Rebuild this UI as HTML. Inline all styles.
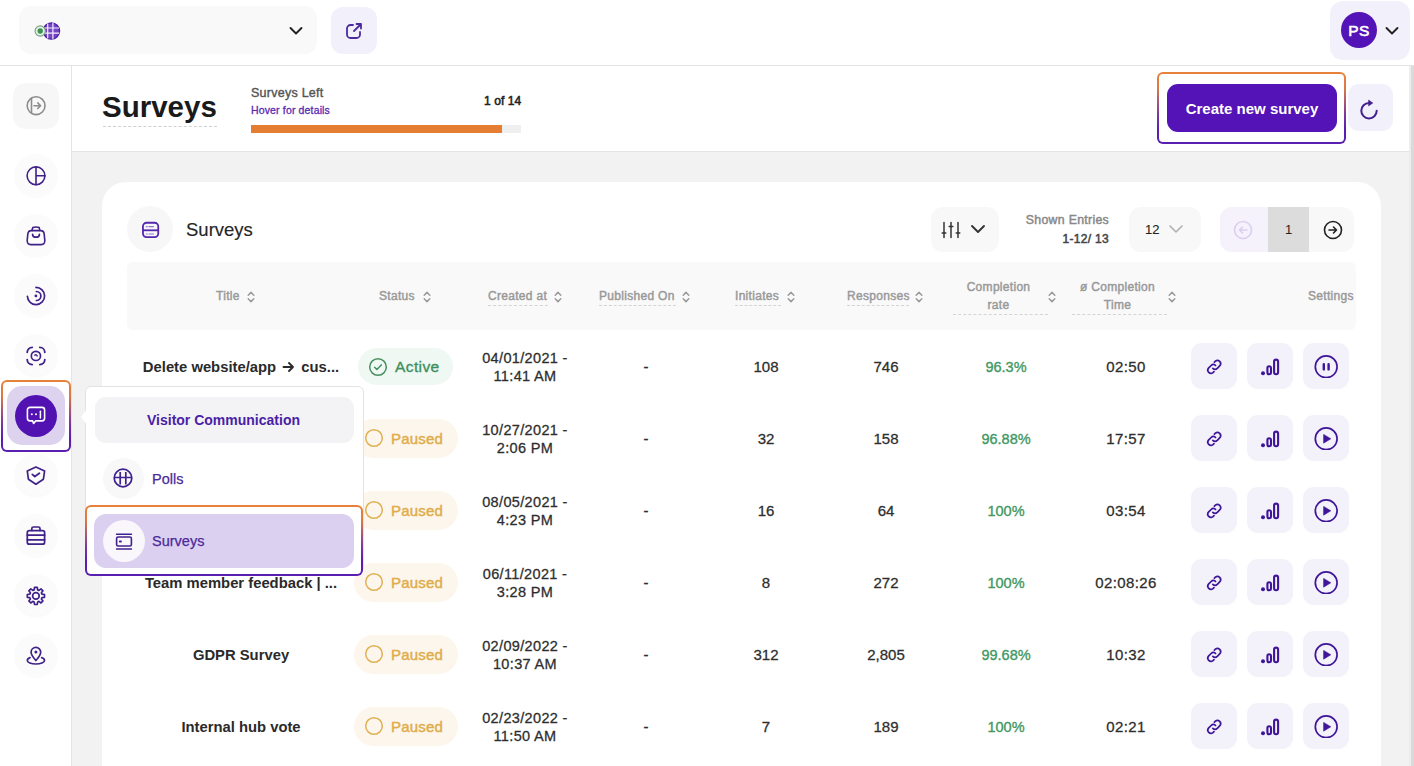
<!DOCTYPE html>
<html><head><meta charset="utf-8">
<style>
*{box-sizing:border-box;margin:0;padding:0}
html,body{width:1414px;height:766px;overflow:hidden}
body{font-family:"Liberation Sans",sans-serif;background:#f2f2f2;position:relative;color:#2b2b2b}
.abs{position:absolute}
svg{display:block}
#topbar{left:0;top:0;width:1414px;height:66px;background:#fff;border-bottom:1px solid #e4e4e4}
#sidebar{left:0;top:66px;width:72px;height:700px;background:#fff;border-right:1px solid #e4e4e4}
#pagehead{left:72px;top:66px;width:1342px;height:86px;background:#fff;border-bottom:1px solid #e4e4e4}
#rightline{left:1409px;top:66px;width:5px;height:700px;background:linear-gradient(90deg,#ededed 0,#ededed 2px,#dadada 2px,#dadada 5px)}
#card{left:102px;top:182px;width:1279px;height:620px;background:#fff;border-radius:24px}
.sbtn{position:absolute;left:14px;width:44px;height:44px;border-radius:50%;background:#fcfbfb}
.sbtn svg{position:absolute;left:11px;top:11px}
.hl{position:absolute;border:2.6px solid transparent;border-radius:6px;
 background:linear-gradient(#fff,#fff) padding-box,linear-gradient(180deg,#e8823a 0%,#dd7a42 22%,#7a35a0 60%,#5a1fb0 80%,#5a1fb0 100%) border-box}
.th{position:absolute;top:289px;font-size:12px;font-weight:400;color:#999;white-space:nowrap;-webkit-text-stroke:0.45px #999;letter-spacing:0.3px}
.sort{position:absolute;top:290px}
.cell{position:absolute;font-size:15px;font-weight:700;color:#2b2b2b;white-space:nowrap;text-align:center}
.num{font-weight:400;color:#333}
.badge{position:absolute;height:40px;border-radius:20px}
.act{position:absolute;width:46px;height:46px;border-radius:11px;background:#f3f1fa}
.act svg{position:absolute;left:11px;top:11px}

</style></head><body>
<!-- top bar -->
<div id="topbar" class="abs"></div>
<div class="abs" style="left:19px;top:6px;width:298px;height:48px;border-radius:12px;background:#f9f9f9"></div>
<svg class="abs" style="left:30px;top:18px" width="32" height="26" viewBox="0 0 32 26">
 <circle cx="21.4" cy="13" r="8.2" fill="#7444c4" stroke="#4d1fa3" stroke-width="1.3"/>
 <path d="M17.7 5.6v14.8M22.9 4.8v16.4M13.6 10h15.6M13.6 15.2h15.6" stroke="#f3ecfc" stroke-width="1.2"/>
 <circle cx="10.2" cy="13" r="5.1" fill="#e3f5e6" stroke="#789f80" stroke-width="1.1"/>
 <circle cx="10.2" cy="13" r="2.7" fill="#3d8f4f"/>
</svg>
<svg class="abs" style="left:288px;top:24px" width="16" height="12" viewBox="0 0 16 12"><path d="M2.5 4l5.5 5.5 5.5-5.5" fill="none" stroke="#222" stroke-width="1.9" stroke-linecap="round" stroke-linejoin="round"/></svg>
<div class="abs" style="left:331px;top:7px;width:46px;height:47px;border-radius:12px;background:#f2f0fa"></div>
<svg class="abs" style="left:344px;top:21px" width="20" height="20" viewBox="0 0 20 20"><path d="M9 4H6.5A3.5 3.5 0 0 0 3 7.5v6A3.5 3.5 0 0 0 6.5 17h6a3.5 3.5 0 0 0 3.5-3.5V11M10 10l7-7M12.5 3H17v4.5" fill="none" stroke="#4b2a9c" stroke-width="1.8" stroke-linecap="round" stroke-linejoin="round"/></svg>

<div class="abs" style="left:1330px;top:1px;width:80px;height:59px;border-radius:13px;background:#f2f0fa"></div>
<div class="abs" style="left:1341px;top:12px;width:36px;height:36px;border-radius:50%;background:#5313b6;color:#fff;font-size:15.5px;font-weight:400;-webkit-text-stroke:0.6px #fff;text-align:center;line-height:38px;letter-spacing:0.3px">PS</div>
<svg class="abs" style="left:1384px;top:24px" width="16" height="12" viewBox="0 0 16 12"><path d="M2.5 4l5.5 5.5 5.5-5.5" fill="none" stroke="#222" stroke-width="1.9" stroke-linecap="round" stroke-linejoin="round"/></svg>


<div id="sidebar" class="abs"></div>
<div id="pagehead" class="abs"></div>
<div id="rightline" class="abs"></div>
<div class="abs" style="left:13px;top:83px;width:46px;height:46px;border-radius:13px;background:#f7f7f7"></div>
<svg class="abs" style="left:25px;top:95px" width="22" height="22" viewBox="0 0 22 22"><circle cx="11.1" cy="10.7" r="8.9" fill="none" stroke="#8c8c8c" stroke-width="1.6"/><path d="M6.5 2.3v16.8" stroke="#8c8c8c" stroke-width="1.6"/><path d="M9 10.7h6.6M12.8 7.9l2.8 2.8-2.8 2.8" fill="none" stroke="#8c8c8c" stroke-width="1.6" stroke-linecap="round" stroke-linejoin="round"/></svg>
<div class="sbtn" style="top:154px"><svg width="22" height="22" viewBox="0 0 22 22"><circle cx="11" cy="10.8" r="8.9" fill="none" stroke="#3f2189" stroke-width="1.6" stroke-linecap="round" stroke-linejoin="round"/><path d="M11 1.9v17.8M11 10.8h8.9" fill="none" stroke="#3f2189" stroke-width="1.6" stroke-linecap="round" stroke-linejoin="round"/></svg></div>
<div class="sbtn" style="top:214px"><svg width="22" height="22" viewBox="0 0 22 22"><path d="M6.9 5.4 7.8 2.6Q11 1.4 14.2 2.6L14.8 5.4" fill="none" stroke="#3f2189" stroke-width="1.6" stroke-linecap="round" stroke-linejoin="round"/><path d="M6.2 5.6h9.6q3 0 3.4 3.5l.6 6.3q.2 4.2-3.6 4.2H5.8q-3.8 0-3.6-4.2l.6-6.3q.4-3.5 3.4-3.5z" fill="none" stroke="#3f2189" stroke-width="1.6" stroke-linecap="round" stroke-linejoin="round"/><path d="M7.6 9.4q0 2.8 3.4 2.8t3.4-2.8" fill="none" stroke="#3f2189" stroke-width="1.7" stroke-linecap="round" stroke-linejoin="round"/></svg></div>
<div class="sbtn" style="top:274px"><svg width="22" height="22" viewBox="0 0 22 22"><path d="M11 2.4A8.6 8.6 0 1 1 2.4 11.4" fill="none" stroke="#3f2189" stroke-width="1.7" stroke-linecap="round" stroke-linejoin="round"/><path d="M11.4 6.5A4.5 4.5 0 0 1 11.4 15.5" fill="none" stroke="#3f2189" stroke-width="1.7" stroke-linecap="round" stroke-linejoin="round"/><circle cx="10.9" cy="10.9" r="1.4" fill="#3f2189"/></svg></div>
<div class="sbtn" style="top:334px"><svg width="22" height="22" viewBox="0 0 22 22"><path d="M2.2 7.3A5 5 0 0 1 7.2 2.3M14.8 2.3A5 5 0 0 1 19.8 7.3M19.8 14.6A5 5 0 0 1 14.8 19.6M7.2 19.6A5 5 0 0 1 2.2 14.6" fill="none" stroke="#3f2189" stroke-width="1.8" stroke-linecap="round" stroke-linejoin="round"/><circle cx="10.9" cy="10.9" r="4.6" fill="none" stroke="#3f2189" stroke-width="1.7" stroke-linecap="round" stroke-linejoin="round"/><path d="M9.8 10.2a1.4 1.4 0 0 1 2.4.9" fill="none" stroke="#3f2189" stroke-width="1.3" stroke-linecap="round" stroke-linejoin="round"/></svg></div>
<div class="hl" style="left:1px;top:380px;width:70px;height:72px"></div>
<div class="abs" style="left:7px;top:386px;width:58px;height:59px;border-radius:15px;background:#ddd3ef"></div>
<div class="abs" style="left:15px;top:395px;width:42px;height:42px;border-radius:50%;background:#5212b2"></div>
<svg class="abs" style="left:25px;top:405px" width="22" height="22" viewBox="0 0 22 22"><path d="M5 2.4h12a2.6 2.6 0 0 1 2.6 2.6v8.3a2.6 2.6 0 0 1-2.6 2.6h-6.4l-2 2.5-1-2.5H5a2.6 2.6 0 0 1-2.6-2.6V5A2.6 2.6 0 0 1 5 2.4z" fill="none" stroke="#fff" stroke-width="1.6" stroke-linejoin="round"/><circle cx="6.8" cy="9.3" r="1" fill="#fff"/><circle cx="11" cy="9.3" r="1" fill="#fff"/><path d="M15.4 6.2v6.8" stroke="#fff" stroke-width="1.5" stroke-linecap="round"/></svg>
<div class="sbtn" style="top:454px"><svg width="22" height="22" viewBox="0 0 22 22"><path d="M10.9 2.1 19.6 6.1 18.4 14.2 10.9 19.2 3.4 14.2 2.3 6.1z" fill="none" stroke="#3f2189" stroke-width="1.7" stroke-linecap="round" stroke-linejoin="round"/><path d="M7.3 9.4 9.8 11.5 14.4 8.2" fill="none" stroke="#3f2189" stroke-width="1.8" stroke-linecap="round" stroke-linejoin="round"/></svg></div>
<div class="sbtn" style="top:514px"><svg width="22" height="22" viewBox="0 0 22 22"><path d="M6.8 5.4V3.6q0-1.6 1.6-1.6h5q1.6 0 1.6 1.6v1.8" fill="none" stroke="#3f2189" stroke-width="1.7" stroke-linecap="round" stroke-linejoin="round"/><rect x="2.3" y="5.6" width="17.3" height="13.6" rx="2" fill="none" stroke="#3f2189" stroke-width="1.7" stroke-linecap="round" stroke-linejoin="round"/><path d="M2.3 10.2h17.3M2.3 14.8h17.3" fill="none" stroke="#3f2189" stroke-width="1.8" stroke-linecap="round" stroke-linejoin="round"/></svg></div>
<div class="sbtn" style="top:574px"><svg width="22" height="22" viewBox="0 0 22 22"><path d="M9.16 4.85L9.51 2.31L12.29 2.31L12.64 4.85L13.95 5.39L15.99 3.85L17.95 5.81L16.41 7.85L16.95 9.16L19.49 9.51L19.49 12.29L16.95 12.64L16.41 13.95L17.95 15.99L15.99 17.95L13.95 16.41L12.64 16.95L12.29 19.49L9.51 19.49L9.16 16.95L7.85 16.41L5.81 17.95L3.85 15.99L5.39 13.95L4.85 12.64L2.31 12.29L2.31 9.51L4.85 9.16L5.39 7.85L3.85 5.81L5.81 3.85L7.85 5.39Z" fill="none" stroke="#3f2189" stroke-width="1.7" stroke-linecap="round" stroke-linejoin="round"/><circle cx="10.9" cy="10.9" r="3.3" fill="none" stroke="#3f2189" stroke-width="1.7" stroke-linecap="round" stroke-linejoin="round"/></svg></div>
<div class="sbtn" style="top:634px"><svg width="22" height="22" viewBox="0 0 22 22"><path d="M10.9 15.5C8.5 12.8 6.1 10 6.1 7.2a4.8 4.8 0 0 1 9.6 0c0 2.8-2.4 5.6-4.8 8.3z" fill="none" stroke="#3f2189" stroke-width="1.7" stroke-linecap="round" stroke-linejoin="round"/><circle cx="10.9" cy="7" r="1.5" fill="#3f2189"/><path d="M5 12.6C3.2 13.2 2.3 14.2 2.3 15.5c0 2 3.9 3.5 8.6 3.5s8.6-1.5 8.6-3.5c0-1.3-.9-2.3-2.8-2.9" fill="none" stroke="#3f2189" stroke-width="1.7" stroke-linecap="round" stroke-linejoin="round"/></svg></div>
<!-- page header -->
<div class="abs" style="left:102px;top:90px;font-size:29.5px;font-weight:700;color:#1a1a1a;letter-spacing:0;line-height:34px">Surveys</div>
<div class="abs" style="left:103px;top:126px;width:114px;height:0;border-top:1px dashed #cfcfcf"></div>
<div class="abs" style="left:251px;top:86px;font-size:12.5px;font-weight:400;color:#555;line-height:14px;-webkit-text-stroke:0.4px #555;letter-spacing:0.25px">Surveys Left</div>
<div class="abs" style="left:251px;top:104px;font-size:10.5px;font-weight:400;color:#5a2ab3;line-height:12px;-webkit-text-stroke:0.3px #5a2ab3;letter-spacing:0.15px">Hover for details</div>
<div class="abs" style="left:484px;top:94px;font-size:12px;font-weight:400;-webkit-text-stroke:0.55px #222;letter-spacing:0.1px;color:#222;line-height:14px">1 of 14</div>
<div class="abs" style="left:251px;top:125px;width:270px;height:8px;background:#efefef"></div>
<div class="abs" style="left:251px;top:125px;width:251px;height:8px;background:#e57d33"></div>

<div class="hl" style="left:1157px;top:72px;width:189px;height:72px"></div>
<div class="abs" style="left:1167px;top:84px;width:170px;height:48px;border-radius:11px;background:#5313b6;color:#fff;font-size:15px;font-weight:700;text-align:center;line-height:50px">Create new survey</div>
<div class="abs" style="left:1348px;top:84px;width:45px;height:47px;border-radius:11px;background:#f2f0fa"></div>
<svg class="abs" style="left:1358px;top:98px" width="22" height="22" viewBox="0 0 22 22"><path d="M18.7 12.8A7.7 7.7 0 1 1 11 5" fill="none" stroke="#43228f" stroke-width="2" stroke-linecap="round"/><path d="M10.6 2.1l4.2 2.9-4.2 2.9z" fill="#43228f" stroke="#43228f" stroke-width="0.6" stroke-linejoin="round"/></svg>

<!-- card -->
<div id="card" class="abs"></div>
<!-- card header -->
<div class="abs" style="left:127px;top:206px;width:46px;height:46px;border-radius:50%;background:#f7f7f7"></div>
<svg class="abs" style="left:140px;top:220px" width="20" height="20" viewBox="0 0 20 20"><rect x="2.95" y="2.75" width="15.3" height="14.4" rx="3.6" fill="none" stroke="#5527b0" stroke-width="1.8"/><path d="M2.95 10.3h15.3" stroke="#5527b0" stroke-width="1.8"/><path d="M6.3 6.6h.9M8.9 6.6h4.6M6.3 14h.9M8.9 14h4.6" stroke="#8f72cc" stroke-width="1.2" stroke-linecap="round"/></svg>
<div class="abs" style="left:186px;top:219px;font-size:18.5px;color:#262626;-webkit-text-stroke:0.15px #262626;line-height:22px">Surveys</div>

<div class="abs" style="left:931px;top:207px;width:68px;height:45px;border-radius:12px;background:#f8f8f8"></div>
<svg class="abs" style="left:940px;top:220px" width="22" height="20" viewBox="0 0 22 20"><path d="M4 2.5v15M11 2.5v15M18 2.5v15" stroke="#333" stroke-width="1.5" stroke-linecap="round"/><path d="M2.2 13h3.6M9.2 6.5h3.6M16.2 13h3.6" stroke="#333" stroke-width="1.5" stroke-linecap="round"/></svg>
<svg class="abs" style="left:970px;top:223px" width="16" height="12" viewBox="0 0 16 12"><path d="M2 3l6 6 6-6" fill="none" stroke="#333" stroke-width="1.9" stroke-linecap="round" stroke-linejoin="round"/></svg>
<div class="abs" style="left:1000px;top:213px;width:109px;text-align:right;font-size:12.3px;font-weight:400;color:#888;line-height:14px;-webkit-text-stroke:0.45px #888;letter-spacing:0.3px">Shown Entries</div>
<div class="abs" style="left:1000px;top:232px;width:109px;text-align:right;font-size:12px;font-weight:400;-webkit-text-stroke:0.5px #444;letter-spacing:0.3px;color:#444;line-height:14px">1-12/ 13</div>
<div class="abs" style="left:1129px;top:207px;width:72px;height:45px;border-radius:12px;background:#f8f8f8"></div>
<div class="abs" style="left:1145px;top:222px;font-size:13px;color:#222;line-height:15px;-webkit-text-stroke:0.1px #222">12</div>
<svg class="abs" style="left:1168px;top:223px" width="16" height="12" viewBox="0 0 16 12"><path d="M2 3l6 6 6-6" fill="none" stroke="#b0b0b0" stroke-width="1.6" stroke-linecap="round" stroke-linejoin="round"/></svg>
<div class="abs" style="left:1220px;top:207px;width:134px;height:45px;border-radius:12px;background:#f8f8f8;overflow:hidden">
  <div class="abs" style="left:0;top:0;width:48px;height:45px;background:#f5f2fc"></div>
  <div class="abs" style="left:48px;top:0;width:41px;height:45px;background:#dcdcdc;text-align:center;line-height:45px;font-size:13px;color:#222">1</div>
</div>
<svg class="abs" style="left:1232px;top:219px" width="22" height="22" viewBox="0 0 22 22"><circle cx="11" cy="11" r="8.5" fill="none" stroke="#d9cff0" stroke-width="1.6"/><path d="M15 11H7.5M10.5 8l-3 3 3 3" fill="none" stroke="#d9cff0" stroke-width="1.6" stroke-linecap="round" stroke-linejoin="round"/></svg>
<svg class="abs" style="left:1322px;top:219px" width="22" height="22" viewBox="0 0 22 22"><circle cx="11" cy="11" r="8.5" fill="none" stroke="#222" stroke-width="1.6"/><path d="M7 11h7.5M11.5 8l3 3-3 3" fill="none" stroke="#222" stroke-width="1.6" stroke-linecap="round" stroke-linejoin="round"/></svg>

<!-- table header -->
<div class="abs" style="left:127px;top:262px;width:1229px;height:68px;border-radius:6px;background:#f9f9f9"></div>
<div class="th" style="left:216px">Title</div><div class="sort" style="left:247px"><svg width="8" height="14" viewBox="0 0 8 14"><path d="M1.2 5.2L4 2.4l2.8 2.8M1.2 8.8L4 11.6l2.8-2.8" fill="none" stroke="#9b9b9b" stroke-width="1.5" stroke-linecap="round" stroke-linejoin="round"/></svg></div>
<div class="th" style="left:379px">Status</div><div class="sort" style="left:423px"><svg width="8" height="14" viewBox="0 0 8 14"><path d="M1.2 5.2L4 2.4l2.8 2.8M1.2 8.8L4 11.6l2.8-2.8" fill="none" stroke="#9b9b9b" stroke-width="1.5" stroke-linecap="round" stroke-linejoin="round"/></svg></div>
<div class="th" style="left:488px">Created at</div><div class="sort" style="left:554px"><svg width="8" height="14" viewBox="0 0 8 14"><path d="M1.2 5.2L4 2.4l2.8 2.8M1.2 8.8L4 11.6l2.8-2.8" fill="none" stroke="#9b9b9b" stroke-width="1.5" stroke-linecap="round" stroke-linejoin="round"/></svg></div>
<div class="abs" style="left:488px;top:305px;width:60px;border-top:1px dashed #d4d4d4"></div>
<div class="th" style="left:599px">Published On</div><div class="sort" style="left:682px"><svg width="8" height="14" viewBox="0 0 8 14"><path d="M1.2 5.2L4 2.4l2.8 2.8M1.2 8.8L4 11.6l2.8-2.8" fill="none" stroke="#9b9b9b" stroke-width="1.5" stroke-linecap="round" stroke-linejoin="round"/></svg></div>
<div class="abs" style="left:599px;top:305px;width:77px;border-top:1px dashed #d4d4d4"></div>
<div class="th" style="left:735px">Initiates</div><div class="sort" style="left:787px"><svg width="8" height="14" viewBox="0 0 8 14"><path d="M1.2 5.2L4 2.4l2.8 2.8M1.2 8.8L4 11.6l2.8-2.8" fill="none" stroke="#9b9b9b" stroke-width="1.5" stroke-linecap="round" stroke-linejoin="round"/></svg></div>
<div class="abs" style="left:735px;top:305px;width:46px;border-top:1px dashed #d4d4d4"></div>
<div class="th" style="left:847px">Responses</div><div class="sort" style="left:915px"><svg width="8" height="14" viewBox="0 0 8 14"><path d="M1.2 5.2L4 2.4l2.8 2.8M1.2 8.8L4 11.6l2.8-2.8" fill="none" stroke="#9b9b9b" stroke-width="1.5" stroke-linecap="round" stroke-linejoin="round"/></svg></div>
<div class="abs" style="left:847px;top:305px;width:62px;border-top:1px dashed #d4d4d4"></div>
<div class="th" style="left:951px;width:95px;text-align:center;top:278px;line-height:18px">Completion<br>rate</div><div class="sort" style="left:1048px"><svg width="8" height="14" viewBox="0 0 8 14"><path d="M1.2 5.2L4 2.4l2.8 2.8M1.2 8.8L4 11.6l2.8-2.8" fill="none" stroke="#9b9b9b" stroke-width="1.5" stroke-linecap="round" stroke-linejoin="round"/></svg></div>
<div class="abs" style="left:953px;top:314px;width:95px;border-top:1px dashed #d4d4d4"></div>
<div class="th" style="left:1070px;width:95px;text-align:center;top:278px;line-height:18px">ø Completion<br>Time</div><div class="sort" style="left:1168px"><svg width="8" height="14" viewBox="0 0 8 14"><path d="M1.2 5.2L4 2.4l2.8 2.8M1.2 8.8L4 11.6l2.8-2.8" fill="none" stroke="#9b9b9b" stroke-width="1.5" stroke-linecap="round" stroke-linejoin="round"/></svg></div>
<div class="abs" style="left:1072px;top:314px;width:95px;border-top:1px dashed #d4d4d4"></div>
<div class="th" style="left:1308px">Settings</div>



<!-- rows -->
<div class="cell" style="left:127px;width:228px;top:357px;line-height:20px;font-size:14.8px;color:#2a2a2a">Delete website/app <svg style="display:inline-block;vertical-align:-1px;margin:0 2px" width="13" height="12" viewBox="0 0 13 12"><path d="M1.5 6h9.5M7 2l4 4-4 4" fill="none" stroke="#2b2b2b" stroke-width="1.9" stroke-linecap="round" stroke-linejoin="round"/></svg> cus...</div>
<div class="badge" style="left:358px;top:348px;width:95px;height:37px;background:#eff8f3"></div>
<svg class="abs" style="left:368px;top:357px" width="20" height="20" viewBox="0 0 20 20"><circle cx="10" cy="10" r="8.3" fill="none" stroke="#4a8f62" stroke-width="1.5"/><path d="M6.6 10.2l2.3 2.3 4.4-4.6" fill="none" stroke="#4a8f62" stroke-width="1.5" stroke-linecap="round" stroke-linejoin="round"/></svg>
<div class="abs" style="left:395px;top:357px;font-size:15.5px;font-weight:400;color:#3e8f5d;line-height:20px;letter-spacing:0.4px;-webkit-text-stroke:0.35px #3e8f5d">Active</div>
<div class="cell" style="left:465px;width:120px;top:349px;line-height:18px;font-size:14.5px;letter-spacing:0.35px;font-weight:400;color:#2e2e2e;-webkit-text-stroke:0.28px #2e2e2e">04/01/2021 -<br>11:41 AM</div>
<div class="cell" style="left:586px;width:120px;top:357px;line-height:20px;font-weight:400;color:#2e2e2e;-webkit-text-stroke:0.28px #2e2e2e">-</div>
<div class="cell" style="left:706px;width:120px;top:357px;line-height:20px;font-weight:400;color:#2e2e2e;-webkit-text-stroke:0.28px #2e2e2e">108</div>
<div class="cell" style="left:826px;width:120px;top:357px;line-height:20px;font-weight:400;color:#2e2e2e;-webkit-text-stroke:0.28px #2e2e2e">746</div>
<div class="cell" style="left:946px;width:120px;top:357px;line-height:20px;font-size:14.5px;font-weight:400;color:#419863;-webkit-text-stroke:0.35px #419863">96.3%</div>
<div class="cell" style="left:1066px;width:120px;top:357px;line-height:20px;letter-spacing:0.4px;font-weight:400;color:#2e2e2e;-webkit-text-stroke:0.28px #2e2e2e">02:50</div>
<div class="act" style="left:1191px;top:343px"><svg width="24" height="24" viewBox="0 0 24 24"><g transform="translate(0.2 0.9)"><path d="M10.6 13.4a3.2 3.2 0 0 0 4.5 0l2.6-2.6a3.2 3.2 0 0 0-4.5-4.5l-1 1M13.4 10.6a3.2 3.2 0 0 0-4.5 0l-2.6 2.6a3.2 3.2 0 0 0 4.5 4.5l1-1" fill="none" stroke="#3f1699" stroke-width="1.7" stroke-linecap="round"/></g></svg></div>
<div class="act" style="left:1247px;top:343px"><svg width="24" height="24" viewBox="0 0 24 24"><circle cx="5" cy="19.2" r="2" fill="#3f1699"/><rect x="9.4" y="12.2" width="3.6" height="8.1" rx="1.8" fill="none" stroke="#3f1699" stroke-width="2.1"/><rect x="16.1" y="5.6" width="4" height="14.7" rx="2" fill="none" stroke="#3f1699" stroke-width="2.1"/></svg></div>
<div class="act" style="left:1303px;top:343px"><svg width="24" height="24" viewBox="0 0 24 24"><circle cx="12.2" cy="12.8" r="10.9" fill="none" stroke="#3f1699" stroke-width="1.7"/><path d="M9.8 10.2v5.2M14.6 10.2v5.2" stroke="#3f1699" stroke-width="2.4" stroke-linecap="round"/></svg></div>
<div class="cell" style="left:127px;width:228px;top:429px;line-height:20px;font-size:14.8px;color:#2a2a2a">Survey feedback 2021</div>
<div class="badge" style="left:354px;top:419px;width:104px;height:39px;background:#fdf6ec"></div>
<svg class="abs" style="left:364px;top:428px" width="20" height="20" viewBox="0 0 20 20"><circle cx="10" cy="10" r="8.3" fill="none" stroke="#dfb153" stroke-width="1.5"/></svg>
<div class="abs" style="left:391px;top:429px;font-size:15px;font-weight:400;color:#e0ad4c;line-height:20px;letter-spacing:0.2px;-webkit-text-stroke:0.45px #e0ad4c">Paused</div>
<div class="cell" style="left:465px;width:120px;top:421px;line-height:18px;font-size:14.5px;letter-spacing:0.35px;font-weight:400;color:#2e2e2e;-webkit-text-stroke:0.28px #2e2e2e">10/27/2021 -<br>2:06 PM</div>
<div class="cell" style="left:586px;width:120px;top:429px;line-height:20px;font-weight:400;color:#2e2e2e;-webkit-text-stroke:0.28px #2e2e2e">-</div>
<div class="cell" style="left:706px;width:120px;top:429px;line-height:20px;font-weight:400;color:#2e2e2e;-webkit-text-stroke:0.28px #2e2e2e">32</div>
<div class="cell" style="left:826px;width:120px;top:429px;line-height:20px;font-weight:400;color:#2e2e2e;-webkit-text-stroke:0.28px #2e2e2e">158</div>
<div class="cell" style="left:946px;width:120px;top:429px;line-height:20px;font-size:14.5px;font-weight:400;color:#419863;-webkit-text-stroke:0.35px #419863">96.88%</div>
<div class="cell" style="left:1066px;width:120px;top:429px;line-height:20px;letter-spacing:0.4px;font-weight:400;color:#2e2e2e;-webkit-text-stroke:0.28px #2e2e2e">17:57</div>
<div class="act" style="left:1191px;top:415px"><svg width="24" height="24" viewBox="0 0 24 24"><g transform="translate(0.2 0.9)"><path d="M10.6 13.4a3.2 3.2 0 0 0 4.5 0l2.6-2.6a3.2 3.2 0 0 0-4.5-4.5l-1 1M13.4 10.6a3.2 3.2 0 0 0-4.5 0l-2.6 2.6a3.2 3.2 0 0 0 4.5 4.5l1-1" fill="none" stroke="#3f1699" stroke-width="1.7" stroke-linecap="round"/></g></svg></div>
<div class="act" style="left:1247px;top:415px"><svg width="24" height="24" viewBox="0 0 24 24"><circle cx="5" cy="19.2" r="2" fill="#3f1699"/><rect x="9.4" y="12.2" width="3.6" height="8.1" rx="1.8" fill="none" stroke="#3f1699" stroke-width="2.1"/><rect x="16.1" y="5.6" width="4" height="14.7" rx="2" fill="none" stroke="#3f1699" stroke-width="2.1"/></svg></div>
<div class="act" style="left:1303px;top:415px"><svg width="24" height="24" viewBox="0 0 24 24"><circle cx="12.2" cy="12.8" r="10.9" fill="none" stroke="#3f1699" stroke-width="1.7"/><path d="M9.6 8.4l7.2 4.4-7.2 4.4z" fill="#3f1699" stroke="#3f1699" stroke-width="0.6" stroke-linejoin="round"/></svg></div>
<div class="cell" style="left:127px;width:228px;top:501px;line-height:20px;font-size:14.8px;color:#2a2a2a">Product research</div>
<div class="badge" style="left:354px;top:491px;width:104px;height:39px;background:#fdf6ec"></div>
<svg class="abs" style="left:364px;top:500px" width="20" height="20" viewBox="0 0 20 20"><circle cx="10" cy="10" r="8.3" fill="none" stroke="#dfb153" stroke-width="1.5"/></svg>
<div class="abs" style="left:391px;top:501px;font-size:15px;font-weight:400;color:#e0ad4c;line-height:20px;letter-spacing:0.2px;-webkit-text-stroke:0.45px #e0ad4c">Paused</div>
<div class="cell" style="left:465px;width:120px;top:493px;line-height:18px;font-size:14.5px;letter-spacing:0.35px;font-weight:400;color:#2e2e2e;-webkit-text-stroke:0.28px #2e2e2e">08/05/2021 -<br>4:23 PM</div>
<div class="cell" style="left:586px;width:120px;top:501px;line-height:20px;font-weight:400;color:#2e2e2e;-webkit-text-stroke:0.28px #2e2e2e">-</div>
<div class="cell" style="left:706px;width:120px;top:501px;line-height:20px;font-weight:400;color:#2e2e2e;-webkit-text-stroke:0.28px #2e2e2e">16</div>
<div class="cell" style="left:826px;width:120px;top:501px;line-height:20px;font-weight:400;color:#2e2e2e;-webkit-text-stroke:0.28px #2e2e2e">64</div>
<div class="cell" style="left:946px;width:120px;top:501px;line-height:20px;font-size:14.5px;font-weight:400;color:#419863;-webkit-text-stroke:0.35px #419863">100%</div>
<div class="cell" style="left:1066px;width:120px;top:501px;line-height:20px;letter-spacing:0.4px;font-weight:400;color:#2e2e2e;-webkit-text-stroke:0.28px #2e2e2e">03:54</div>
<div class="act" style="left:1191px;top:487px"><svg width="24" height="24" viewBox="0 0 24 24"><g transform="translate(0.2 0.9)"><path d="M10.6 13.4a3.2 3.2 0 0 0 4.5 0l2.6-2.6a3.2 3.2 0 0 0-4.5-4.5l-1 1M13.4 10.6a3.2 3.2 0 0 0-4.5 0l-2.6 2.6a3.2 3.2 0 0 0 4.5 4.5l1-1" fill="none" stroke="#3f1699" stroke-width="1.7" stroke-linecap="round"/></g></svg></div>
<div class="act" style="left:1247px;top:487px"><svg width="24" height="24" viewBox="0 0 24 24"><circle cx="5" cy="19.2" r="2" fill="#3f1699"/><rect x="9.4" y="12.2" width="3.6" height="8.1" rx="1.8" fill="none" stroke="#3f1699" stroke-width="2.1"/><rect x="16.1" y="5.6" width="4" height="14.7" rx="2" fill="none" stroke="#3f1699" stroke-width="2.1"/></svg></div>
<div class="act" style="left:1303px;top:487px"><svg width="24" height="24" viewBox="0 0 24 24"><circle cx="12.2" cy="12.8" r="10.9" fill="none" stroke="#3f1699" stroke-width="1.7"/><path d="M9.6 8.4l7.2 4.4-7.2 4.4z" fill="#3f1699" stroke="#3f1699" stroke-width="0.6" stroke-linejoin="round"/></svg></div>
<div class="cell" style="left:127px;width:228px;top:573px;line-height:20px;font-size:14.8px;color:#2a2a2a">Team member feedback | ...</div>
<div class="badge" style="left:354px;top:563px;width:104px;height:39px;background:#fdf6ec"></div>
<svg class="abs" style="left:364px;top:572px" width="20" height="20" viewBox="0 0 20 20"><circle cx="10" cy="10" r="8.3" fill="none" stroke="#dfb153" stroke-width="1.5"/></svg>
<div class="abs" style="left:391px;top:573px;font-size:15px;font-weight:400;color:#e0ad4c;line-height:20px;letter-spacing:0.2px;-webkit-text-stroke:0.45px #e0ad4c">Paused</div>
<div class="cell" style="left:465px;width:120px;top:565px;line-height:18px;font-size:14.5px;letter-spacing:0.35px;font-weight:400;color:#2e2e2e;-webkit-text-stroke:0.28px #2e2e2e">06/11/2021 -<br>3:28 PM</div>
<div class="cell" style="left:586px;width:120px;top:573px;line-height:20px;font-weight:400;color:#2e2e2e;-webkit-text-stroke:0.28px #2e2e2e">-</div>
<div class="cell" style="left:706px;width:120px;top:573px;line-height:20px;font-weight:400;color:#2e2e2e;-webkit-text-stroke:0.28px #2e2e2e">8</div>
<div class="cell" style="left:826px;width:120px;top:573px;line-height:20px;font-weight:400;color:#2e2e2e;-webkit-text-stroke:0.28px #2e2e2e">272</div>
<div class="cell" style="left:946px;width:120px;top:573px;line-height:20px;font-size:14.5px;font-weight:400;color:#419863;-webkit-text-stroke:0.35px #419863">100%</div>
<div class="cell" style="left:1066px;width:120px;top:573px;line-height:20px;letter-spacing:0.4px;font-weight:400;color:#2e2e2e;-webkit-text-stroke:0.28px #2e2e2e">02:08:26</div>
<div class="act" style="left:1191px;top:559px"><svg width="24" height="24" viewBox="0 0 24 24"><g transform="translate(0.2 0.9)"><path d="M10.6 13.4a3.2 3.2 0 0 0 4.5 0l2.6-2.6a3.2 3.2 0 0 0-4.5-4.5l-1 1M13.4 10.6a3.2 3.2 0 0 0-4.5 0l-2.6 2.6a3.2 3.2 0 0 0 4.5 4.5l1-1" fill="none" stroke="#3f1699" stroke-width="1.7" stroke-linecap="round"/></g></svg></div>
<div class="act" style="left:1247px;top:559px"><svg width="24" height="24" viewBox="0 0 24 24"><circle cx="5" cy="19.2" r="2" fill="#3f1699"/><rect x="9.4" y="12.2" width="3.6" height="8.1" rx="1.8" fill="none" stroke="#3f1699" stroke-width="2.1"/><rect x="16.1" y="5.6" width="4" height="14.7" rx="2" fill="none" stroke="#3f1699" stroke-width="2.1"/></svg></div>
<div class="act" style="left:1303px;top:559px"><svg width="24" height="24" viewBox="0 0 24 24"><circle cx="12.2" cy="12.8" r="10.9" fill="none" stroke="#3f1699" stroke-width="1.7"/><path d="M9.6 8.4l7.2 4.4-7.2 4.4z" fill="#3f1699" stroke="#3f1699" stroke-width="0.6" stroke-linejoin="round"/></svg></div>
<div class="cell" style="left:127px;width:228px;top:645px;line-height:20px;font-size:14.8px;color:#2a2a2a">GDPR Survey</div>
<div class="badge" style="left:354px;top:635px;width:104px;height:39px;background:#fdf6ec"></div>
<svg class="abs" style="left:364px;top:644px" width="20" height="20" viewBox="0 0 20 20"><circle cx="10" cy="10" r="8.3" fill="none" stroke="#dfb153" stroke-width="1.5"/></svg>
<div class="abs" style="left:391px;top:645px;font-size:15px;font-weight:400;color:#e0ad4c;line-height:20px;letter-spacing:0.2px;-webkit-text-stroke:0.45px #e0ad4c">Paused</div>
<div class="cell" style="left:465px;width:120px;top:637px;line-height:18px;font-size:14.5px;letter-spacing:0.35px;font-weight:400;color:#2e2e2e;-webkit-text-stroke:0.28px #2e2e2e">02/09/2022 -<br>10:37 AM</div>
<div class="cell" style="left:586px;width:120px;top:645px;line-height:20px;font-weight:400;color:#2e2e2e;-webkit-text-stroke:0.28px #2e2e2e">-</div>
<div class="cell" style="left:706px;width:120px;top:645px;line-height:20px;font-weight:400;color:#2e2e2e;-webkit-text-stroke:0.28px #2e2e2e">312</div>
<div class="cell" style="left:826px;width:120px;top:645px;line-height:20px;font-weight:400;color:#2e2e2e;-webkit-text-stroke:0.28px #2e2e2e">2,805</div>
<div class="cell" style="left:946px;width:120px;top:645px;line-height:20px;font-size:14.5px;font-weight:400;color:#419863;-webkit-text-stroke:0.35px #419863">99.68%</div>
<div class="cell" style="left:1066px;width:120px;top:645px;line-height:20px;letter-spacing:0.4px;font-weight:400;color:#2e2e2e;-webkit-text-stroke:0.28px #2e2e2e">10:32</div>
<div class="act" style="left:1191px;top:631px"><svg width="24" height="24" viewBox="0 0 24 24"><g transform="translate(0.2 0.9)"><path d="M10.6 13.4a3.2 3.2 0 0 0 4.5 0l2.6-2.6a3.2 3.2 0 0 0-4.5-4.5l-1 1M13.4 10.6a3.2 3.2 0 0 0-4.5 0l-2.6 2.6a3.2 3.2 0 0 0 4.5 4.5l1-1" fill="none" stroke="#3f1699" stroke-width="1.7" stroke-linecap="round"/></g></svg></div>
<div class="act" style="left:1247px;top:631px"><svg width="24" height="24" viewBox="0 0 24 24"><circle cx="5" cy="19.2" r="2" fill="#3f1699"/><rect x="9.4" y="12.2" width="3.6" height="8.1" rx="1.8" fill="none" stroke="#3f1699" stroke-width="2.1"/><rect x="16.1" y="5.6" width="4" height="14.7" rx="2" fill="none" stroke="#3f1699" stroke-width="2.1"/></svg></div>
<div class="act" style="left:1303px;top:631px"><svg width="24" height="24" viewBox="0 0 24 24"><circle cx="12.2" cy="12.8" r="10.9" fill="none" stroke="#3f1699" stroke-width="1.7"/><path d="M9.6 8.4l7.2 4.4-7.2 4.4z" fill="#3f1699" stroke="#3f1699" stroke-width="0.6" stroke-linejoin="round"/></svg></div>
<div class="cell" style="left:127px;width:228px;top:717px;line-height:20px;font-size:14.8px;color:#2a2a2a">Internal hub vote</div>
<div class="badge" style="left:354px;top:707px;width:104px;height:39px;background:#fdf6ec"></div>
<svg class="abs" style="left:364px;top:716px" width="20" height="20" viewBox="0 0 20 20"><circle cx="10" cy="10" r="8.3" fill="none" stroke="#dfb153" stroke-width="1.5"/></svg>
<div class="abs" style="left:391px;top:717px;font-size:15px;font-weight:400;color:#e0ad4c;line-height:20px;letter-spacing:0.2px;-webkit-text-stroke:0.45px #e0ad4c">Paused</div>
<div class="cell" style="left:465px;width:120px;top:709px;line-height:18px;font-size:14.5px;letter-spacing:0.35px;font-weight:400;color:#2e2e2e;-webkit-text-stroke:0.28px #2e2e2e">02/23/2022 -<br>11:50 AM</div>
<div class="cell" style="left:586px;width:120px;top:717px;line-height:20px;font-weight:400;color:#2e2e2e;-webkit-text-stroke:0.28px #2e2e2e">-</div>
<div class="cell" style="left:706px;width:120px;top:717px;line-height:20px;font-weight:400;color:#2e2e2e;-webkit-text-stroke:0.28px #2e2e2e">7</div>
<div class="cell" style="left:826px;width:120px;top:717px;line-height:20px;font-weight:400;color:#2e2e2e;-webkit-text-stroke:0.28px #2e2e2e">189</div>
<div class="cell" style="left:946px;width:120px;top:717px;line-height:20px;font-size:14.5px;font-weight:400;color:#419863;-webkit-text-stroke:0.35px #419863">100%</div>
<div class="cell" style="left:1066px;width:120px;top:717px;line-height:20px;letter-spacing:0.4px;font-weight:400;color:#2e2e2e;-webkit-text-stroke:0.28px #2e2e2e">02:21</div>
<div class="act" style="left:1191px;top:703px"><svg width="24" height="24" viewBox="0 0 24 24"><g transform="translate(0.2 0.9)"><path d="M10.6 13.4a3.2 3.2 0 0 0 4.5 0l2.6-2.6a3.2 3.2 0 0 0-4.5-4.5l-1 1M13.4 10.6a3.2 3.2 0 0 0-4.5 0l-2.6 2.6a3.2 3.2 0 0 0 4.5 4.5l1-1" fill="none" stroke="#3f1699" stroke-width="1.7" stroke-linecap="round"/></g></svg></div>
<div class="act" style="left:1247px;top:703px"><svg width="24" height="24" viewBox="0 0 24 24"><circle cx="5" cy="19.2" r="2" fill="#3f1699"/><rect x="9.4" y="12.2" width="3.6" height="8.1" rx="1.8" fill="none" stroke="#3f1699" stroke-width="2.1"/><rect x="16.1" y="5.6" width="4" height="14.7" rx="2" fill="none" stroke="#3f1699" stroke-width="2.1"/></svg></div>
<div class="act" style="left:1303px;top:703px"><svg width="24" height="24" viewBox="0 0 24 24"><circle cx="12.2" cy="12.8" r="10.9" fill="none" stroke="#3f1699" stroke-width="1.7"/><path d="M9.6 8.4l7.2 4.4-7.2 4.4z" fill="#3f1699" stroke="#3f1699" stroke-width="0.6" stroke-linejoin="round"/></svg></div>
<!-- popup -->
<div class="abs" style="left:85px;top:386px;width:279px;height:187px;background:#fff;border:1px solid #e3e3e3;border-radius:6px"></div>
<div class="abs" style="left:81px;top:409px;width:0;height:0;border-top:8px solid transparent;border-bottom:8px solid transparent;border-right:6px solid #fff"></div>
<div class="abs" style="left:95px;top:397px;width:259px;height:46px;border-radius:11px;background:#f3f3f5"></div>
<div class="abs" style="left:147px;top:411px;font-size:14px;font-weight:700;color:#4a1ea6;line-height:18px">Visitor Communication</div>
<div class="abs" style="left:103px;top:458px;width:41px;height:41px;border-radius:50%;background:#f8f8f8"></div>
<svg class="abs" style="left:112px;top:467px" width="22" height="22" viewBox="0 0 22 22"><circle cx="11" cy="11" r="8.8" fill="none" stroke="#40208f" stroke-width="1.7"/><path d="M2.4 10.5h17.2M8.2 5v12.5M13.8 5v12.5" stroke="#40208f" stroke-width="1.7"/></svg>
<div class="abs" style="left:152px;top:470px;font-size:14.5px;color:#4a2a9c;line-height:18px;-webkit-text-stroke:0.25px #4a2a9c">Polls</div>
<div class="hl" style="left:85px;top:505px;width:278px;height:71px"></div>
<div class="abs" style="left:94px;top:514px;width:260px;height:54px;border-radius:12px;background:#dcd0f0"></div>
<div class="abs" style="left:103px;top:520px;width:42px;height:42px;border-radius:50%;background:#f9f7fc"></div>
<svg class="abs" style="left:113px;top:530px" width="22" height="22" viewBox="0 0 22 22"><rect x="3.6" y="7" width="14.8" height="9" rx="1.5" fill="none" stroke="#40208f" stroke-width="1.6"/><path d="M3.6 4.2h14.8M3.6 19h14.8" stroke="#40208f" stroke-width="1.6" stroke-linecap="round"/><path d="M6.8 11.5h1.2" stroke="#40208f" stroke-width="1.8" stroke-linecap="round"/></svg>
<div class="abs" style="left:152px;top:532px;font-size:14.5px;color:#4a2a9c;line-height:18px;-webkit-text-stroke:0.25px #4a2a9c">Surveys</div>


</body></html>
